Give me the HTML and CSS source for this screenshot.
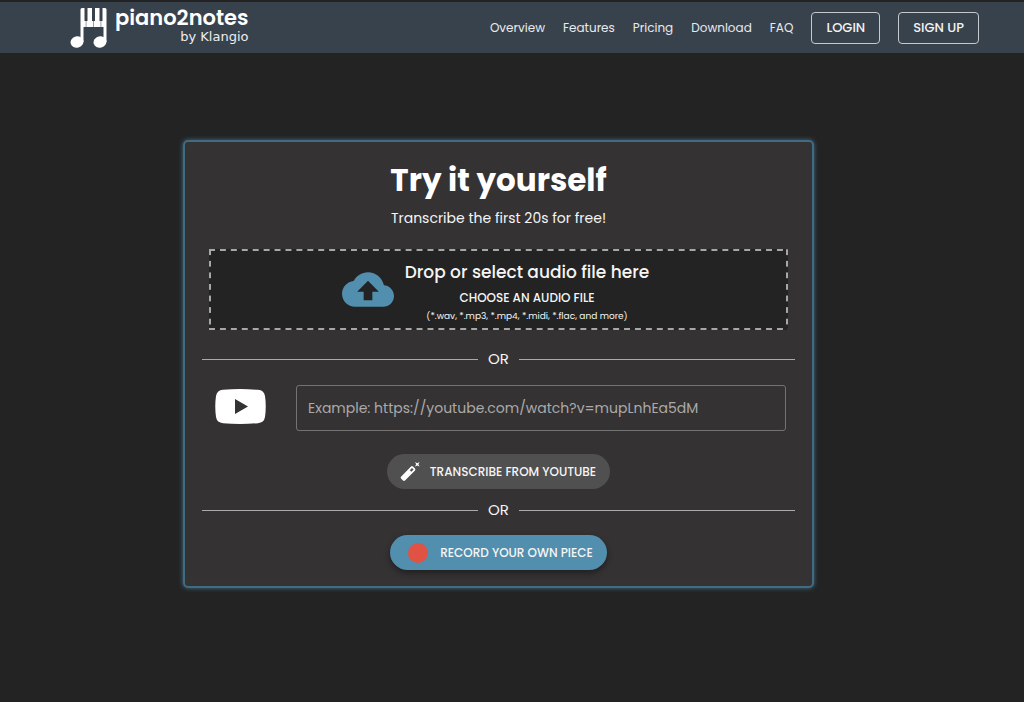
FILE: index.html
```html
<!DOCTYPE html>
<html lang="en">
  <head>
    <meta charset="UTF-8" />
    <meta name="viewport" content="width=device-width, initial-scale=1.0" />
    <title>piano2notes by Klangio</title>
    <link rel="stylesheet" href="styles.css">
  </head>
  <body>
    <header class="navbar">
      <a class="logo" href="#">
        <svg class="logo-mark" viewBox="0 0 36 40" aria-hidden="true">
          <g fill="#fff">
            <path d="M10 1.500Q10 0 11.500 0H34.500Q36 0 36 1.500V34H33V19H13V34H10Z" />
            <ellipse cx="6.500" cy="34" rx="6.500" ry="5.600" transform="rotate(-14 6.500 34)" />
            <ellipse cx="29.500" cy="34" rx="6.500" ry="5.600" transform="rotate(-14 29.500 34)" />
          </g>
          <path fill="#38424d" d="M14 0h3v13h-3zM21.500 0h3v13h-3zM29 0h3v13h-3zM15.300 13h.5v6h-.5zM22.800 13h.5v6h-.5zM30.200 13h.5v6h-.5z" />
        </svg>
        <span class="logo-text">
          <span class="logo-name">piano2notes</span>
          <span class="logo-by">by Klangio</span>
        </span>
      </a>
      <nav class="nav">
        <a href="#overview">Overview</a>
        <a href="#features">Features</a>
        <a href="#pricing">Pricing</a>
        <a href="#download">Download</a>
        <a href="#faq">FAQ</a>
        <button class="btn-outline" type="button">LOGIN</button>
        <button class="btn-outline" type="button">SIGN UP</button>
      </nav>
    </header>

    <main>
      <form class="card">
        <h1>Try it yourself</h1>
        <p class="subtitle">Transcribe the first 20s for free!</p>

        <label class="dropzone" for="audio">
          <svg class="cloud" viewBox="0 4 24 16" aria-hidden="true">
            <path fill="#528ead" d="M19.350 10.040C18.670 6.590 15.640 4 12 4 9.110 4 6.600 5.640 5.350 8.040 2.340 8.360 0 10.910 0 14c0 3.310 2.690 6 6 6h13c2.760 0 5-2.240 5-5 0-2.640-2.050-4.780-4.650-4.960zM14 13v4h-4v-4H7l5-5 5 5h-3z" />
          </svg>
          <span class="drop-text">
            <span class="drop-title">Drop or select audio file here</span>
            <span class="drop-choose">CHOOSE AN AUDIO FILE</span>
            <span class="drop-types">(*.wav, *.mp3, *.mp4, *.midi, *.flac, and more)</span>
          </span>
          <input class="file-input" type="file" id="audio" name="audio" />
        </label>

        <div class="divider">OR</div>

        <div class="youtube">
          <label class="youtube-label" for="url" aria-label="YouTube URL">
            <svg class="youtube-icon" viewBox="0 0 51 35" aria-hidden="true">
              <path fill="#fff" fill-rule="evenodd" d="M8 .8Q25 -.8 43 .8Q49 1.300 50 7Q51.500 17 50 28Q49 33.700 43 34.200Q25 35.800 8 34.200Q2 33.700 1 28Q-.500 17 1 7Q2 1.300 8 .8ZM20 10V25L33 17.500Z" />
            </svg>
          </label>
          <input class="url" type="text" id="url" name="url" placeholder="Example: https://youtube.com/watch?v=mupLnhEa5dM" />
        </div>

        <button class="btn btn-grey" type="button">
          <svg class="wand" viewBox="0 0 20 20" aria-hidden="true">
            <path fill="#fff" fill-rule="evenodd" d="M11 4.500Q12 3.600 13 4.500L15 6.500Q15.800 7.500 15 8.400L5 18.600Q4 19.400 3 18.600L1 16.600Q.200 15.600 1 14.800ZM12 6L9.800 8.200L11.400 9.800L13.600 7.600Z" />
            <path fill="#fff" d="M15 0l2.300 1.200L19.600 0l-1.200 2.300 1.200 2.300-2.300-1.200L15 4.600l1.200-2.300z" />
          </svg>
          TRANSCRIBE FROM YOUTUBE
        </button>

        <div class="divider">OR</div>

        <button class="btn btn-blue" type="button">
          <span class="record"></span>
          RECORD YOUR OWN PIECE
        </button>
      </form>
    </main>
  </body>
</html>
```
FILE: styles.css
```css
* {
  box-sizing: border-box;
}

body {
  margin: 0;
  background: #232323;
  color: #f5f5f5;
  font-family: Poppins, Inter, sans-serif;
}

button,
input {
  font: inherit;
}

.navbar {
  display: flex;
  justify-content: space-between;
  align-items: center;
  height: 53px;
  padding: 0 45px 0 70px;
  background: #38424d;
  border-top: 2px solid #232323;
}

.logo {
  display: flex;
  gap: 8px;
  color: #fff;
  text-decoration: none;
}

.logo-mark {
  width: 37px;
  height: 40px;
}

.logo-text {
  display: flex;
  flex-direction: column;
  text-align: right;
}

.logo-name {
  font-size: 21px;
  font-weight: 600;
  line-height: 20px;
}

.logo-by {
  font-family: "DejaVu Sans", sans-serif;
  font-size: 13px;
  line-height: 18px;
  color: #eee;
}

.nav {
  display: flex;
  align-items: center;
  gap: 18px;
}
.nav a {
  color: #e8eaeb;
  font-size: 12px;
  text-decoration: none;
}

.btn-outline {
  height: 32px;
  padding: 0 14px;
  background: none;
  border: 1px solid #c5c9cc;
  border-radius: 4px;
  color: #f2f2f2;
  font-size: 13px;
  font-weight: 500;
}

main {
  padding: 87px 27px 40px 0;
}

.card {
  display: flex;
  flex-direction: column;
  align-items: center;
  max-width: 631px;
  margin: 0 auto;
  padding: 16px 17px;
  background: #353233;
  border: 2px solid #416b83;
  border-radius: 5px;
  box-shadow: 0 0 5px #416b83;
}

h1 {
  margin: 0;
  color: #fff;
  font-size: 31px;
  font-weight: 700;
  line-height: 44px;
}

.subtitle {
  margin: 4px 0 19px;
  font-size: 14px;
  line-height: 24px;
}

/* dashes are drawn as backgrounds to control their length */
.dropzone {
  --dash: #a7a7a7 6px, transparent 0;
  display: flex;
  justify-content: center;
  align-items: center;
  gap: 11px;
  align-self: stretch;
  height: 81px;
  margin: 0 7px;
  padding-right: 6px;
  background:
    linear-gradient(90deg, var(--dash)) top / 11px 2px round no-repeat,
    linear-gradient(90deg, var(--dash)) bottom / 11px 2px round no-repeat,
    linear-gradient(var(--dash)) left / 2px 11px no-repeat round,
    linear-gradient(var(--dash)) right / 2px 11px no-repeat round,
    #232323;
  cursor: pointer;
}

.cloud {
  width: 52px;
  height: 35px;
}

.drop-text {
  display: flex;
  flex-direction: column;
  align-items: center;
}

.drop-title {
  font-size: 17px;
  font-weight: 500;
  line-height: 32px;
}

.drop-choose {
  font-size: 12px;
  font-weight: 500;
  line-height: 20px;
}

.drop-types {
  font-size: 9px;
  line-height: 16px;
}

.file-input {
  position: absolute;
  width: 1px;
  height: 1px;
  opacity: 0;
}

.divider {
  display: flex;
  align-items: center;
  align-self: stretch;
  gap: 10px;
  font-size: 15px;
  line-height: 20px;
}
.divider::before,
.divider::after {
  content: "";
  flex: 1;
  height: 1px;
  background: #aaa;
}

.dropzone + .divider {
  margin-top: 19px;
}

.youtube {
  display: flex;
  align-items: center;
  align-self: stretch;
  gap: 30px;
  margin: 16px 9px 23px 13px;
}

.youtube-label {
  padding-bottom: 4px;
}

.youtube-icon {
  display: block;
  width: 51px;
  height: 35px;
}

.url {
  flex: 1;
  min-width: 0;
  height: 46px;
  padding: 0 11px;
  background: none;
  border: 1px solid #747273;
  border-radius: 3px;
  color: #fff;
  font-size: 14px;
}
.url::placeholder {
  color: #aaa;
  opacity: 1;
}

.btn {
  display: flex;
  align-items: center;
  height: 35px;
  border: none;
  border-radius: 18px;
  color: #f5f5f5;
  font-size: 12px;
  font-weight: 500;
}

.btn-grey {
  gap: 10px;
  margin-bottom: 11px;
  padding: 0 14px 0 13px;
  background: #505050;
}

.btn-blue {
  gap: 12px;
  margin-top: 15px;
  padding: 0 14px 0 18px;
  background: #528ead;
  box-shadow: 0 3px 6px rgba(0, 0, 0, 0.4);
}

.wand {
  width: 20px;
  height: 20px;
}

.record {
  width: 20px;
  height: 20px;
  border-radius: 50%;
  background: #e05244;
}
```
